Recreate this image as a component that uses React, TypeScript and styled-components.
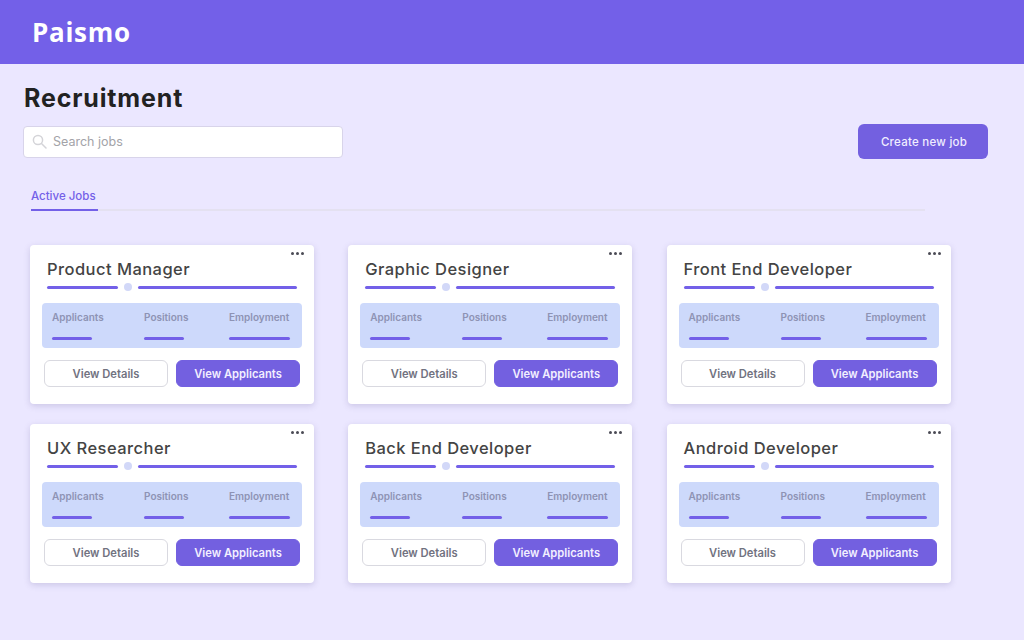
import React from 'react';
import styled, { createGlobalStyle } from 'styled-components';

const GlobalStyles = createGlobalStyle`
  html, body {
    margin: 0;
    padding: 0;
    background: #ebe7ff;
    font-family: 'Inter', 'Liberation Sans', sans-serif;
  }
  * {
    box-sizing: border-box;
  }
`;

const Page = styled.div`
  width: 1024px;
  height: 640px;
  overflow: hidden;
  background: #ebe7ff;
`;

const Header = styled.header`
  height: 64px;
  background: #7360e8;
  display: flex;
  align-items: center;
  padding-left: 32px;
`;

const Logo = styled.div`
  color: #fff;
  font-family: 'Open Sans', sans-serif;
  font-size: 26px;
  font-weight: 700;
  letter-spacing: 0.7px;
  margin-top: -1px;
`;

const Main = styled.main`
  padding: 19px 36px 0 23px;
`;

const Title = styled.h1`
  margin: 0;
  height: 30px;
  line-height: 30px;
  font-size: 25px;
  font-weight: 700;
  color: #222;
  letter-spacing: 0.85px;
  padding-left: 1px;
`;

const Toolbar = styled.div`
  display: flex;
  justify-content: space-between;
  align-items: center;
  margin-top: 11px;
  height: 35px;
`;

const Search = styled.div`
  width: 320px;
  height: 32px;
  background: #fff;
  border: 1px solid #d8d4ea;
  border-radius: 4px;
  display: flex;
  align-items: center;
  gap: 6px;
  padding-left: 8px;
  color: #a3a3a8;
  font-size: 12.5px;
  letter-spacing: 0;
`;

const CreateButton = styled.button`
  width: 130px;
  height: 35px;
  border: 0;
  border-radius: 6px;
  background: #7360e0;
  color: #f0edff;
  font-family: inherit;
  font-size: 11.5px;
  font-weight: 500;
  letter-spacing: 0.25px;
  padding: 1px 0 0 2px;
`;

const Tabs = styled.div`
  margin: 21px 0 0 8px;
  width: 894px;
  border-bottom: 2px solid #e4e1f1;
`;

const Tab = styled.div`
  display: inline-block;
  height: 31px;
  line-height: 33px;
  margin-bottom: -2px;
  border-bottom: 2px solid #7360e8;
  color: #7360e8;
  font-size: 11.5px;
  font-weight: 500;
  width: 67px;
  white-space: nowrap;
  vertical-align: top;
`;

const Grid = styled.div`
  margin: 34px 0 0 7px;
  display: grid;
  grid-template-columns: repeat(3, 284px);
  column-gap: 34.25px;
  row-gap: 20px;
`;

const Card = styled.article`
  position: relative;
  height: 159px;
  background: #fff;
  border-radius: 4px;
  box-shadow: 0 2px 6px rgba(90, 80, 140, 0.22);
  padding: 12px 12px 0;
`;

const More = styled.div`
  position: absolute;
  top: 7px;
  right: 10px;
  display: flex;
  gap: 2px;
`;

const Dot = styled.span`
  width: 3px;
  height: 3px;
  border-radius: 50%;
  background: #4b4b55;
`;

const JobTitle = styled.h2`
  margin: 0 0 0 5px;
  height: 24px;
  line-height: 24px;
  font-size: 16.5px;
  font-weight: 500;
  color: #444;
  letter-spacing: 0.45px;
`;

const Divider = styled.div`
  display: flex;
  align-items: center;
  gap: 6px;
  margin: 2px 5px 0;
  height: 8px;
`;

const Line = styled.span<{ $width: number }>`
  width: ${p => p.$width}px;
  height: 3px;
  border-radius: 2px;
  background: #7360e8;
`;

const Knob = styled.span`
  width: 8px;
  height: 8px;
  border-radius: 50%;
  background: #d2d8f8;
`;

const Stats = styled.div`
  display: grid;
  grid-template-columns: 92px 85px 61px;
  width: 260px;
  height: 45px;
  margin-top: 12px;
  padding: 8px 0 0 10px;
  background: #cdd9fb;
  border-radius: 4px;
`;

const Stat = styled.div<{ $bar: number }>`
  display: flex;
  flex-direction: column;
  color: #8e93b4;
  font-size: 10px;
  font-weight: 600;
  line-height: 12px;
  white-space: nowrap;

  &::after {
    content: '';
    width: ${p => p.$bar}px;
    height: 3px;
    margin-top: 14px;
    border-radius: 2px;
    background: #7360e8;
  }
`;

const Actions = styled.div`
  display: flex;
  gap: 8px;
  margin: 12px 0 0 2px;
`;

const ActionButton = styled.button<{ $primary?: boolean }>`
  width: 124px;
  height: 27px;
  border-radius: 6px;
  border: 1px solid ${p => (p.$primary ? '#7360e0' : '#d9d9e0')};
  background: ${p => (p.$primary ? '#7360e0' : '#fff')};
  color: ${p => (p.$primary ? '#f2efff' : '#71727f')};
  font-family: inherit;
  font-size: 11.2px;
  font-weight: 600;
  padding: 0;
`;

const jobs = [
  'Product Manager',
  'Graphic Designer',
  'Front End Developer',
  'UX Researcher',
  'Back End Developer',
  'Android Developer',
];

const stats = [
  { label: 'Applicants', bar: 40 },
  { label: 'Positions', bar: 40 },
  { label: 'Employment', bar: 61 },
];

const SearchIcon = () => (
  <svg width="15" height="15" viewBox="0 0 15 15" fill="none" stroke="#d4d4d8" strokeWidth="1.5">
    <circle cx="6" cy="6" r="4.6" />
    <path d="M9.5 9.5 14 14" strokeLinecap="round" />
  </svg>
);

const JobCard = ({ title }: { title: string }) => (
  <Card>
    <More>
      <Dot />
      <Dot />
      <Dot />
    </More>
    <JobTitle>{title}</JobTitle>
    <Divider>
      <Line $width={71} />
      <Knob />
      <Line $width={159} />
    </Divider>
    <Stats>
      {stats.map(s => (
        <Stat key={s.label} $bar={s.bar}>
          {s.label}
        </Stat>
      ))}
    </Stats>
    <Actions>
      <ActionButton>View Details</ActionButton>
      <ActionButton $primary>View Applicants</ActionButton>
    </Actions>
  </Card>
);

const App = () => (
  <Page>
    <GlobalStyles />
    <Header>
      <Logo>Paismo</Logo>
    </Header>
    <Main>
      <Title>Recruitment</Title>
      <Toolbar>
        <Search>
          <SearchIcon />
          Search jobs
        </Search>
        <CreateButton>Create new job</CreateButton>
      </Toolbar>
      <Tabs>
        <Tab>Active Jobs</Tab>
      </Tabs>
      <Grid>
        {jobs.map(j => (
          <JobCard key={j} title={j} />
        ))}
      </Grid>
    </Main>
  </Page>
);

export default App;
